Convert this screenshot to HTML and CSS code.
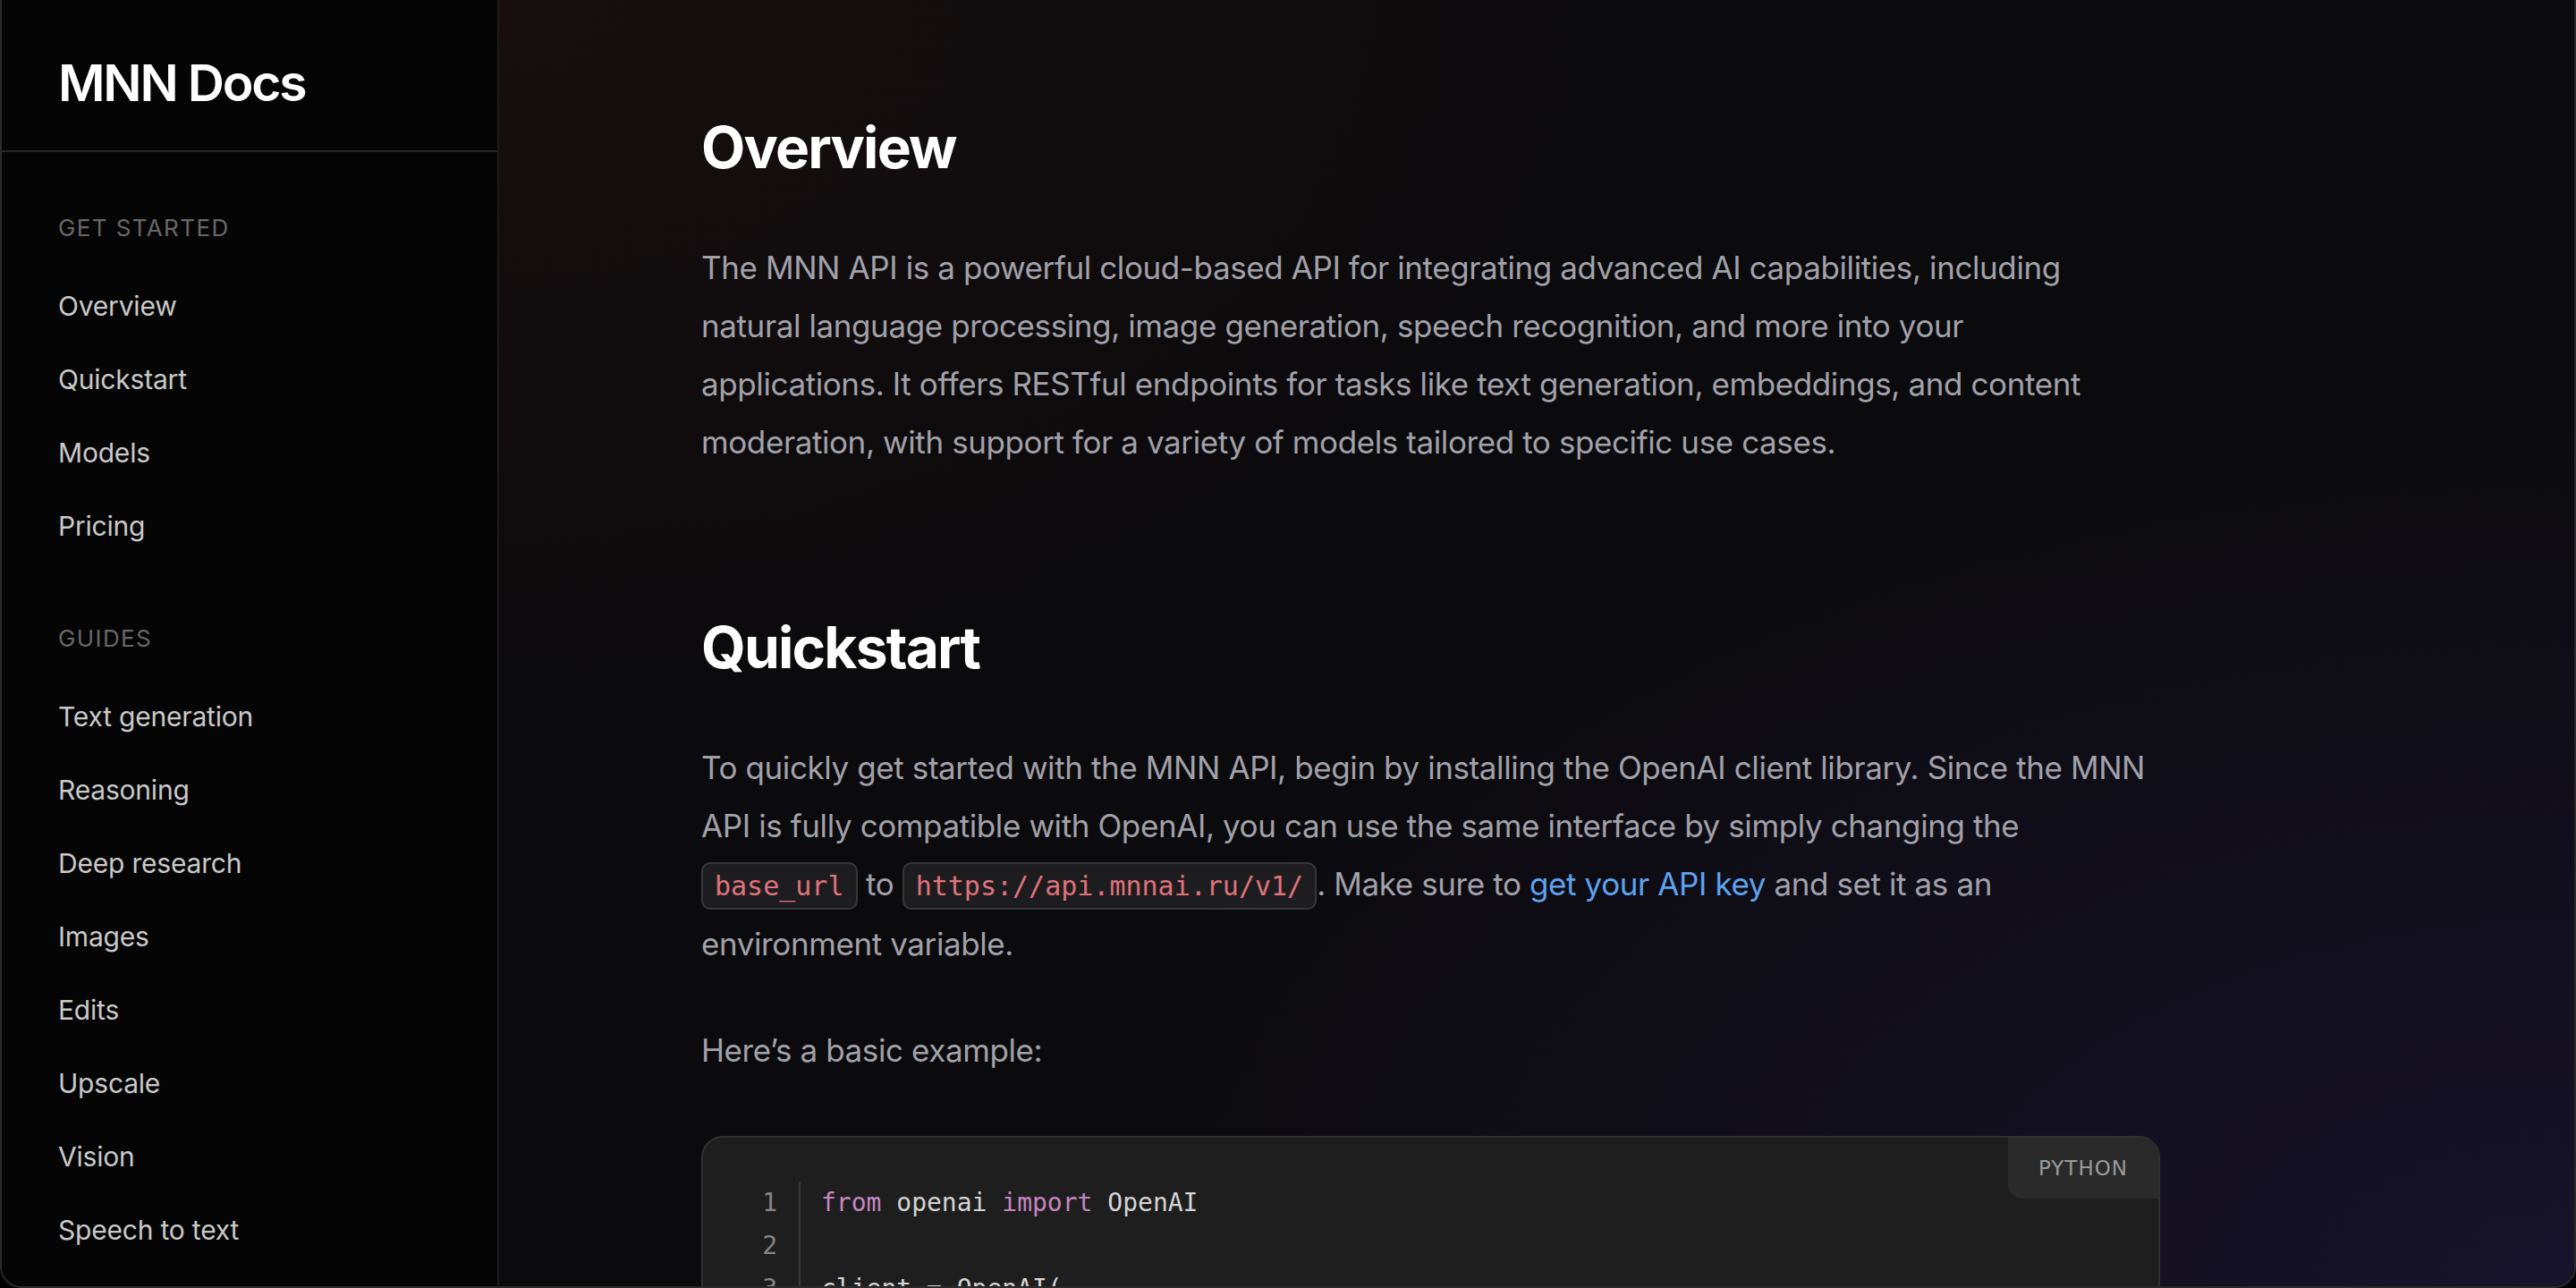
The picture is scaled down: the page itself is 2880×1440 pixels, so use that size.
FILE: index.html
```html
<!DOCTYPE html>
<html lang="en">
<head>
<meta charset="utf-8">
<title>MNN Docs</title>
<link rel="stylesheet" href="styles.css">
</head>
<body>
<div class="frame">
  <aside class="sidebar">
    <div class="brand">MNN Docs</div>
    <nav class="nav">
      <div class="group">
        <div class="group-label">GET STARTED</div>
        <a class="nav-item">Overview</a>
        <a class="nav-item">Quickstart</a>
        <a class="nav-item">Models</a>
        <a class="nav-item">Pricing</a>
      </div>
      <div class="group">
        <div class="group-label">GUIDES</div>
        <a class="nav-item">Text generation</a>
        <a class="nav-item">Reasoning</a>
        <a class="nav-item">Deep research</a>
        <a class="nav-item">Images</a>
        <a class="nav-item">Edits</a>
        <a class="nav-item">Upscale</a>
        <a class="nav-item">Vision</a>
        <a class="nav-item">Speech to text</a>
        <a class="nav-item">Text to speech</a>
        <a class="nav-item">Embeddings</a>
      </div>
    </nav>
  </aside>
  <main class="main">
    <section class="section">
      <h1 class="title">Overview</h1>
      <p class="text">The MNN API is a powerful cloud-based API for integrating advanced AI capabilities, including natural language processing, image generation, speech recognition, and more into your applications. It offers RESTful endpoints for tasks like text generation, embeddings, and content moderation, with support for a variety of models tailored to specific use cases.</p>
    </section>
    <section class="section section-gap">
      <h1 class="title">Quickstart</h1>
      <p class="text">To quickly get started with the MNN API, begin by installing the OpenAI client library. Since the MNN API is fully compatible with OpenAI, you can use the same interface by simply changing the <code class="inline">base_url</code> to <code class="inline">https://api.mnnai.ru/v1/</code>. Make sure to <a class="link">get your API key</a> and set it as an environment variable.</p>
      <p class="text text-next">Here’s a basic example:</p>
      <div class="code-block">
        <div class="lang">PYTHON</div>
        <div class="gutter">
          <div>1</div><div>2</div><div>3</div><div>4</div><div>5</div><div>6</div><div>7</div>
        </div>
        <pre class="code"><span class="kw">from</span> openai <span class="kw">import</span> OpenAI

client = OpenAI(
    api_key=<span class="str">"YOUR_API_KEY"</span>,
    base_url=<span class="str">"https://api.mnnai.ru/v1/"</span>
)
</pre>
      </div>
    </section>
  </main>
</div>
</body>
</html>
```

FILE: styles.css
```css
html, body {
  margin: 0;
  padding: 0;
  background: #000;
  height: 100%;
  overflow: hidden;
}

.frame {
  display: flex;
  height: 1440px;
  box-sizing: border-box;
  border: 2px solid #2a2a2a;
  border-top: none;
  border-radius: 0 0 24px 24px;
  overflow: hidden;
  font-family: Inter, "Noto Sans", sans-serif;
}

.sidebar {
  width: 556px;
  flex: none;
  box-sizing: border-box;
  background: #050505;
  border-right: 2px solid #1c1c1c;
}

.brand {
  height: 170px;
  box-sizing: border-box;
  padding: 63px 0 0 63px;
  border-bottom: 2px solid #262626;
  color: #ffffff;
  font-size: 57px;
  line-height: 60px;
  font-weight: 600;
  letter-spacing: -2.2px;
}

.nav {
  padding: 0 0 0 63px;
}

.group {
  display: flex;
  flex-direction: column;
  margin-top: 69px;
}

.group-label {
  color: #676767;
  font-size: 26px;
  line-height: 32px;
  letter-spacing: 1.4px;
  font-weight: 400;
  margin-bottom: 30px;
}

.nav-item {
  color: #c9c9c9;
  font-size: 30px;
  line-height: 82px;
  font-weight: 400;
  letter-spacing: -0.2px;
}

.main {
  flex: 1;
  padding: 126px 0 0 226px;
  background-color: #0b0a0c;
  background-image:
    radial-gradient(ellipse 75% 70% at 100% 100%, rgba(26, 21, 48, 0.85), rgba(26, 21, 48, 0) 100%),
    radial-gradient(ellipse 55% 55% at 0% 0%, rgba(24, 15, 15, 0.9), rgba(24, 15, 15, 0) 100%);
}

.section {
  width: 1631px;
}

.section-gap {
  margin-top: 158px;
}

.title {
  margin: 0 0 64px 0;
  color: #ffffff;
  font-size: 64px;
  line-height: 77px;
  font-weight: 700;
  letter-spacing: -1.8px;
}

.text {
  margin: 0;
  max-width: 1618px;
  color: #a1a1aa;
  font-size: 35px;
  line-height: 65px;
  font-weight: 400;
  letter-spacing: -0.4px;
}

.text-next {
  margin-top: 54px;
}

.inline {
  font-family: "DejaVu Sans Mono", monospace;
  font-size: 30px;
  letter-spacing: 0;
  color: #e0727c;
  background: #1d1d1f;
  border: 2px solid #37373a;
  border-radius: 10px;
  padding: 7px 13px;
}

.link {
  color: #5ea2ef;
}

.code-block {
  position: relative;
  display: flex;
  margin-top: 63px;
  background: #1e1e1e;
  border: 2px solid #303030;
  border-radius: 24px;
  padding: 49px 0 40px 0;
  overflow: hidden;
}

.lang {
  position: absolute;
  top: 0;
  right: 0;
  width: 168px;
  height: 68px;
  box-sizing: border-box;
  display: flex;
  align-items: center;
  justify-content: center;
  background: #2a2a2a;
  border-radius: 0 0 0 16px;
  color: #9a9a9a;
  font-family: "DejaVu Sans", sans-serif;
  font-size: 23px;
  letter-spacing: 1px;
}

.gutter {
  width: 109px;
  box-sizing: border-box;
  padding-right: 24px;
  border-right: 2px solid #383838;
  text-align: right;
  color: #858585;
  font-family: "DejaVu Sans Mono", monospace;
  font-size: 28px;
  line-height: 48px;
}

.code {
  margin: 0;
  padding-left: 23px;
  color: #d4d4d4;
  font-family: "DejaVu Sans Mono", monospace;
  font-size: 28px;
  line-height: 48px;
}

.kw {
  color: #c586c0;
}

.str {
  color: #ce9178;
}
```
